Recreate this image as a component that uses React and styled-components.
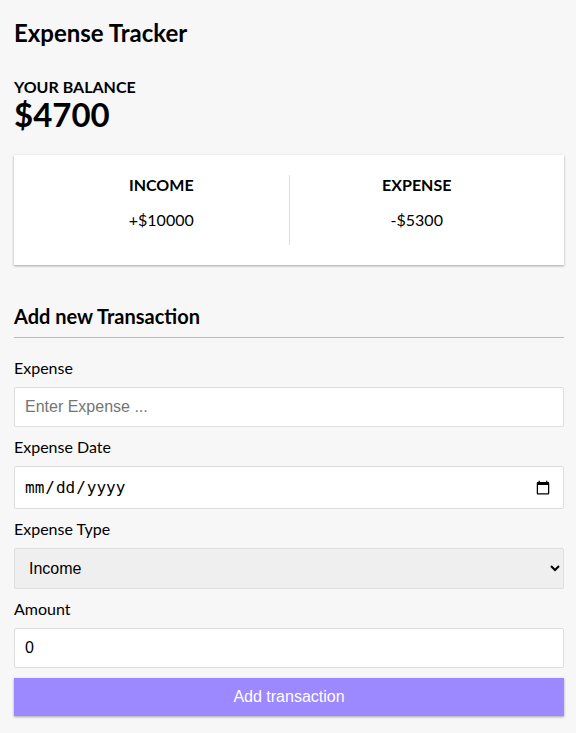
import React, { useState } from 'react';
import styled, { createGlobalStyle } from 'styled-components';

const GlobalStyle = createGlobalStyle`
    * {
        box-sizing: border-box;
    }
    body {
        margin: 0;
        background-color: #f7f7f7;
        font-family: 'Lato', 'Liberation Sans', sans-serif;
        color: #000;
    }
`

const Container = styled.div`
    width: 550px;
    margin: 0 0 0 14px;
    padding: 18px 0 17px;
`

const Title = styled.h2`
    font-size: 24px;
    margin: 0 0 30px;
`

const BalanceLabel = styled.h4`
    margin: 0;
    font-size: 16px;
    text-transform: uppercase;
`

const Balance = styled.h1`
    font-size: 33px;
    line-height: 37px;
    margin: 0 0 22px;
`

const Summary = styled.div`
    display: flex;
    background-color: #fff;
    padding: 20px;
    box-shadow: 0 1px 3px rgba(0, 0, 0, 0.12), 0 1px 2px rgba(0, 0, 0, 0.24);
`

const SummaryCol = styled.div`
    flex: 1;
    text-align: center;
    border-right: ${props => (props.divider ? '1px solid #dedede' : 'none')};
    h4 {
        margin: 0;
        font-size: 16px;
        text-transform: uppercase;
    }
    p {
        margin: 16px 0;
        font-size: 16px;
    }
`

const SectionTitle = styled.h3`
    font-size: 20px;
    margin: 39px 0 10px;
    padding-bottom: 9px;
    border-bottom: 1px solid #bbb;
`

const Field = styled.div`
    label {
        display: inline-block;
        margin: 10px 0;
        font-size: 16px;
    }
`

const TextInput = styled.input`
    display: block;
    width: 100%;
    padding: 10px;
    font-family: 'Liberation Sans', Arial, sans-serif;
    font-size: 16px;
    border: 1px solid #dedede;
    border-radius: 2px;
    background: #fff;
    color: #000;
    outline: none;
    &::placeholder {
        color: #757575;
    }
    &[type='date'] {
        font-family: 'DejaVu Sans Mono', monospace;
        padding: 10px 10px 10px 9px;
        height: 43px;
    }
`

const Select = styled.select`
    display: block;
    width: 100%;
    height: 41px;
    padding: 10px 8px 10px 10px;
    font-family: 'Liberation Sans', Arial, sans-serif;
    font-size: 16px;
    border: 1px solid #dedede;
    border-radius: 2px;
    background-color: #efefef;
    color: #000;
    outline: none;
`

const Button = styled.button`
    display: block;
    width: 100%;
    margin: 10px 0 0;
    padding: 10px;
    border: 0;
    background-color: #9c88ff;
    color: #fff;
    font-family: 'Liberation Sans', Arial, sans-serif;
    font-size: 16px;
    cursor: pointer;
    box-shadow: 0 1px 3px rgba(0, 0, 0, 0.12), 0 1px 2px rgba(0, 0, 0, 0.24);
`

export default function App() {
    const [text, setText] = useState('')
    const [date, setDate] = useState('')
    const [type, setType] = useState('income')
    const [amount, setAmount] = useState(0)

    return (
        <>
            <GlobalStyle />
            <Container>
                <Title>Expense Tracker</Title>
                <BalanceLabel>Your Balance</BalanceLabel>
                <Balance>$4700</Balance>

                <Summary>
                    <SummaryCol divider>
                        <h4>Income</h4>
                        <p>+$10000</p>
                    </SummaryCol>
                    <SummaryCol>
                        <h4>Expense</h4>
                        <p>-$5300</p>
                    </SummaryCol>
                </Summary>

                <SectionTitle>Add new Transaction</SectionTitle>
                <form onSubmit={e => e.preventDefault()}>
                    <Field>
                        <label htmlFor="text">Expense</label>
                        <TextInput id="text" type="text" value={text} onChange={e => setText(e.target.value)} placeholder="Enter Expense ..." />
                    </Field>
                    <Field>
                        <label htmlFor="date">Expense Date</label>
                        <TextInput id="date" type="date" value={date} onChange={e => setDate(e.target.value)} />
                    </Field>
                    <Field>
                        <label htmlFor="type">Expense Type</label>
                        <Select id="type" value={type} onChange={e => setType(e.target.value)}>
                            <option value="income">Income</option>
                            <option value="expense">Expense</option>
                        </Select>
                    </Field>
                    <Field>
                        <label htmlFor="amount">Amount</label>
                        <TextInput id="amount" type="number" value={amount} onChange={e => setAmount(e.target.value)} />
                    </Field>
                    <Button type="submit">Add transaction</Button>
                </form>
            </Container>
        </>
    )
}
